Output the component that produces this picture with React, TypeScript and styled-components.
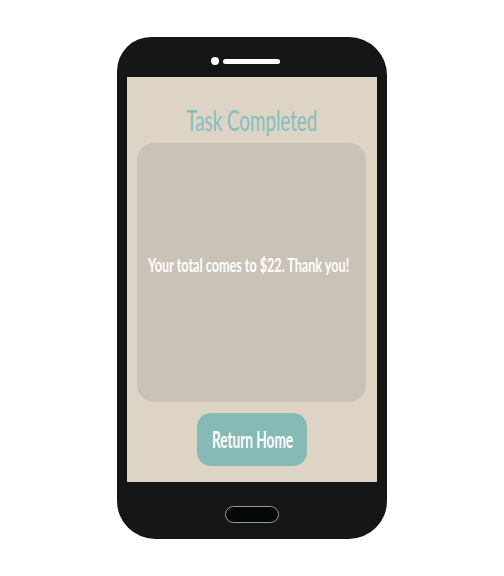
import React from 'react';
import styled, { createGlobalStyle } from 'styled-components';

const GlobalStyle = createGlobalStyle`
  html, body {
    margin: 0;
    padding: 0;
    background: #ffffff;
  }
  body {
    font-family: Lato, 'Open Sans', sans-serif;
  }
`;

const Page = styled.div`
  width: 504px;
  height: 576px;
  display: flex;
  align-items: center;
  justify-content: center;
`;

const Phone = styled.div`
  width: 270px;
  height: 502px;
  background: #161616;
  border-radius: 34px 38px 38px 38px;
  display: flex;
  flex-direction: column;
  padding: 0 10px;
  box-sizing: border-box;
`;

const TopBezel = styled.div`
  height: 40px;
  display: flex;
  align-items: center;
  justify-content: center;
  gap: 4px;
  padding: 8px 13px 0 0;
  box-sizing: border-box;
`;

const Camera = styled.span`
  width: 8px;
  height: 8px;
  border-radius: 50%;
  background: #ffffff;
`;

const Speaker = styled.span`
  width: 57px;
  height: 5px;
  border-radius: 3px;
  background: #ffffff;
`;

const Screen = styled.div`
  height: 405px;
  background: #ddd4c5;
  display: flex;
  flex-direction: column;
  align-items: center;
  padding: 0 11px 16px 10px;
  box-sizing: border-box;
`;

// the reference uses a tall condensed face; squeeze Lato horizontally to match
const Squeeze = styled.span<{ $scale: number }>`
  display: inline-block;
  white-space: nowrap;
  transform: scaleX(${(p) => p.$scale});
  transform-origin: center;
`;

const Title = styled.h1`
  margin: 0;
  height: 66px;
  width: 100%;
  display: flex;
  align-items: center;
  justify-content: center;
  padding-top: 19px;
  box-sizing: border-box;
  font-size: 28px;
  font-weight: normal;
  color: #85bfbe;
`;

const Card = styled.div`
  width: 100%;
  height: 259px;
  background: #cbc2b7;
  border-radius: 17px;
  display: flex;
  align-items: center;
  justify-content: center;
  padding: 0 6px 15px 0;
  box-sizing: border-box;
`;

const Message = styled.p`
  margin: 0;
  display: flex;
  justify-content: center;
  color: #ffffff;
  font-size: 18px;
  font-weight: 700;
`;

const HomeLink = styled.button`
  margin-top: 11px;
  width: 110px;
  height: 53px;
  padding: 0 0 0 3px;
  border: none;
  border-radius: 14px;
  background: #85bab7;
  color: #ffffff;
  font-family: inherit;
  font-size: 22px;
  font-weight: 700;
  display: flex;
  align-items: center;
  justify-content: center;
  cursor: pointer;
`;

const BottomBezel = styled.div`
  flex: 1;
  display: flex;
  align-items: center;
  justify-content: center;
  padding-top: 7px;
  box-sizing: border-box;
`;

const HomeButton = styled.span`
  width: 52px;
  height: 15px;
  border: 1px solid #9a9a9a;
  border-radius: 9px;
  background: #050808;
`;

export default function App() {
  return (
    <>
      <GlobalStyle />
      <Page>
        <Phone>
          <TopBezel>
            <Camera />
            <Speaker />
          </TopBezel>
          <Screen>
            <Title>
              <Squeeze $scale={0.67}>Task Completed</Squeeze>
            </Title>
            <Card>
              <Message>
                <Squeeze $scale={0.7}>Your total comes to $22. Thank you!</Squeeze>
              </Message>
            </Card>
            <HomeLink>
              <Squeeze $scale={0.62}>Return Home</Squeeze>
            </HomeLink>
          </Screen>
          <BottomBezel>
            <HomeButton />
          </BottomBezel>
        </Phone>
      </Page>
    </>
  );
}
